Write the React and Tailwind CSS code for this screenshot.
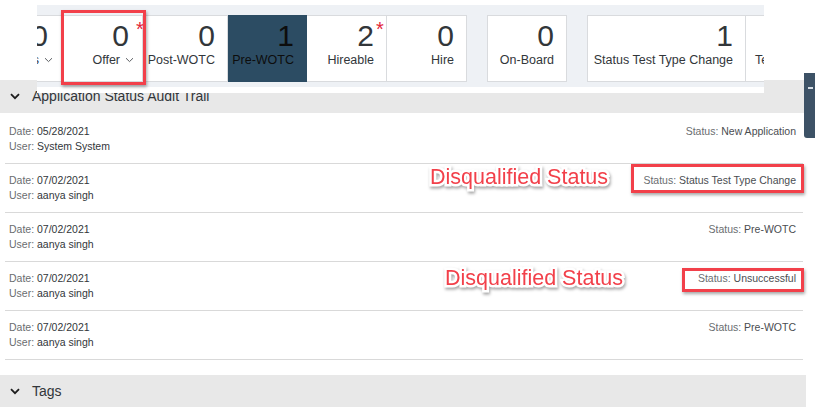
import React from "react";

const Chevron = ({ className = "" }) => (
  <svg width="10" height="7" viewBox="0 0 10 7" className={className}>
    <path d="M1 1.2 L5 5.2 L9 1.2" fill="none" stroke="#1d1d1d" strokeWidth="1.8" />
  </svg>
);

const SmallChevron = () => (
  <svg width="9" height="6" viewBox="0 0 9 6" className="inline-block ml-[5px] mb-[1px]">
    <path d="M1 1.2 L4.5 4.6 L8 1.2" fill="none" stroke="#5b5e62" strokeWidth="1" />
  </svg>
);

function Card({ w, num, label, star, chev, dark, first, extra = "" }) {
  return (
    <div
      className={`relative shrink-0 h-[67px] flex flex-col items-end pt-[5px] ${
        chev ? "pr-[8px]" : "pr-[12px]"
      } border-y border-r ${first ? "border-l" : ""} ${
        dark ? "bg-[#2c4c63] border-[#2c4c63] text-[#0d0d0d]" : "bg-white border-[#d9dbde] text-[#32363a]"
      } ${w} ${extra}`}
    >
      <div className={`relative text-[30px] leading-[30px] ${chev ? "pr-[5px]" : ""}`}>
        {num}
        {star && (
          <span className="absolute left-full top-[-2px] ml-[2px] text-[#e3263a] text-[20px] leading-[20px]">*</span>
        )}
      </div>
      <div className="mt-[1px] text-[12.5px] leading-4 whitespace-nowrap">
        {label}
        {chev && <SmallChevron />}
      </div>
    </div>
  );
}

const rows = [
  { date: "05/28/2021", user: "System System", status: "New Application" },
  { date: "07/02/2021", user: "aanya singh", status: "Status Test Type Change" },
  { date: "07/02/2021", user: "aanya singh", status: "Pre-WOTC" },
  { date: "07/02/2021", user: "aanya singh", status: "Unsuccessful" },
  { date: "07/02/2021", user: "aanya singh", status: "Pre-WOTC" },
];

const annot =
  "absolute text-[21.5px] leading-[23px] text-[#f2404a] whitespace-nowrap [-webkit-text-stroke:5px_white] [paint-order:stroke_fill] drop-shadow-[1px_2px_1.5px_rgba(0,0,0,0.35)]";

export default function App() {
  return (
    <div className="relative w-[815px] h-[416px] overflow-hidden bg-white font-['Liberation_Sans',Arial,sans-serif] text-[#32363a]">
      {/* Underlying page flow */}
      <div className="h-[80px]" />
      <div className="w-[805px] h-[33px] bg-[#e8e8e8] flex items-center">
        <Chevron className="ml-[10px]" />
        <span className="ml-[12px] text-[14px] text-[#32363a]">Application Status Audit Trail</span>
      </div>
      <div className="ml-[5px] w-[798px]">
        {rows.map((r, i) => (
          <div
            key={i}
            className={`flex justify-between border-b border-[#d9d9d9] pl-[4px] pr-[7px] text-[10.5px] leading-[15px] ${
              i === 0 ? "h-[51px] pt-[11px]" : "h-[49px] pt-[9px]"
            }`}
          >
            <div>
              <div>
                <span className="text-[#6a6d70]">Date: </span>
                <span className="text-[#32363a]">{r.date}</span>
              </div>
              <div>
                <span className="text-[#6a6d70]">User: </span>
                <span className="text-[#32363a]">{r.user}</span>
              </div>
            </div>
            <div>
              <span className="text-[#6a6d70]">Status: </span>
              <span className="text-[#4a4d51]">{r.status}</span>
            </div>
          </div>
        ))}
      </div>
      <div className="mt-[15px] w-[806px] h-[32px] bg-[#e8e8e8] flex items-center">
        <Chevron className="ml-[10px]" />
        <span className="ml-[12px] text-[14px] text-[#32363a]">Tags</span>
      </div>

      {/* Sticky header strip overlaying the content */}
      <div className="absolute left-[37px] top-0 w-[727px] h-[93px] bg-white">
        <div className="mt-[5px] h-[82px] bg-[#eef1f5] pt-[10px] flex overflow-hidden">
          <Card w="w-[80px]" num="0" label="Candidates" chev first extra="ml-[-55px]" />
          <Card w="w-[81px]" num="0" label="Offer" chev star />
          <Card w="w-[85px]" num="0" label="Post-WOTC" />
          <Card w="w-[79px]" num="1" label="Pre-WOTC" dark />
          <Card w="w-[80px]" num="2" label="Hireable" star />
          <Card w="w-[80px]" num="0" label="Hire" />
          <Card w="w-[80px]" num="0" label="On-Board" first extra="ml-[20px]" />
          <Card w="w-[159px]" num="1" label="Status Test Type Change" first extra="ml-[20px]" />
          <div className="shrink-0 w-[100px] h-[67px] bg-white border-y border-r border-[#d9dbde] pl-[9px] pt-[36px] text-[12.5px] leading-4 whitespace-nowrap">
            Test Status
          </div>
        </div>
      </div>

      {/* Side tab */}
      <div className="absolute right-0 top-[73px] w-[11px] h-[65px] bg-[#3d5266] rounded-bl-[3px]">
        <div className="ml-[4px] mt-[14px] w-[5px] h-[2px] bg-[#d5dde5]" />
      </div>

      {/* Annotations */}
      <div className="absolute left-[61px] top-[10px] w-[85px] h-[75px] border-[3px] border-[#f2404a] shadow-[1px_2px_3px_rgba(0,0,0,0.35)]" />
      <div className="absolute left-[631px] top-[164px] w-[173px] h-[29px] border-[3px] border-[#f2404a] shadow-[1px_2px_3px_rgba(0,0,0,0.35)]" />
      <div className="absolute left-[682px] top-[268px] w-[122px] h-[24px] border-[3px] border-[#f2404a] shadow-[1px_2px_3px_rgba(0,0,0,0.35)]" />
      <div className={`${annot} left-[430px] top-[166px]`}>Disqualified Status</div>
      <div className={`${annot} left-[445px] top-[267px]`}>Disqualified Status</div>
    </div>
  );
}
